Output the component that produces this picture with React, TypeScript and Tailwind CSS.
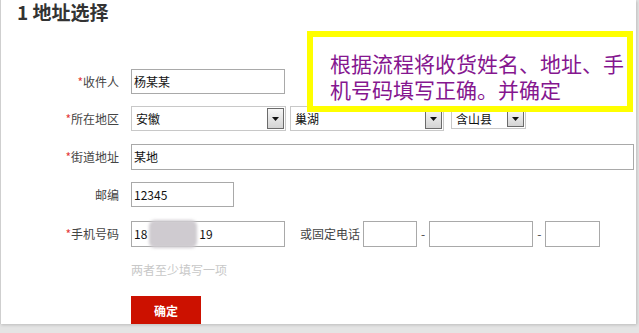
import React from 'react';

const font = { fontFamily: '"Noto Sans CJK SC", "Noto Sans", sans-serif' };

function Label({ text, required }: { text: string; required?: boolean }) {
  return (
    <div className="w-[118px] shrink-0 text-right text-[12px] leading-none text-[#444]">
      {required && <span className="text-[#e4393c]">*</span>}
      {text}
    </div>
  );
}

function Arrow() {
  return (
    <div className="flex h-full w-[17px] items-center justify-center border border-[#6b6b6b] bg-gradient-to-b from-[#f6f6f6] to-[#d4d4d4]">
      <svg width="7" height="4" viewBox="0 0 7 4">
        <path d="M0 0h7L3.5 4z" fill="#111" />
      </svg>
    </div>
  );
}

function Select({ value, className }: { value: string; className: string }) {
  return (
    <div className={`flex items-center border border-[#c8c8c8] bg-white pl-[4px] pr-[1px] py-[1px] ${className}`}>
      <span className="flex-1 text-[12px] text-[#111]">{value}</span>
      <Arrow />
    </div>
  );
}

export default function App() {
  return (
    <div className="h-[333px] w-[639px] bg-[#e4e4e4]" style={font}>
      <div className="relative h-[324px] w-[636px] overflow-hidden border-l border-[#cfcfcf] bg-white shadow-[1px_1px_3px_rgba(0,0,0,0.18)]">
        {/* Title */}
        <h2 className="mt-[2px] pl-[16px] text-[19px] font-bold leading-[20px] text-[#333]">1 地址选择</h2>

        {/* Form */}
        <div className="mt-[47px] flex flex-col">
          <div className="flex h-[25px] items-center">
            <Label text="收件人" required />
            <div className="ml-[12px] flex h-full w-[154px] items-center border border-[#a9a9a9] pl-[2px] text-[12px] text-[#111]">
              杨某某
            </div>
          </div>

          <div className="mt-[12px] flex h-[25px] items-center">
            <Label text="所在地区" required />
            <Select value="安徽" className="ml-[12px] h-[25px] w-[155px]" />
            <Select value="巢湖" className="ml-[4px] h-[25px] w-[154px]" />
            <Select value="含山县" className="ml-[7px] h-[21px] w-[75px]" />
          </div>

          <div className="mt-[13px] flex h-[26px] items-center">
            <Label text="街道地址" required />
            <div className="ml-[12px] flex h-full w-[503px] items-center border border-[#a9a9a9] pl-[2px] text-[12px] text-[#111]">
              某地
            </div>
          </div>

          <div className="mt-[12px] flex h-[25px] items-center">
            <Label text="邮编" />
            <div className="ml-[12px] flex h-full w-[103px] items-center border border-[#a9a9a9] pl-[2px] text-[12px] text-[#111]">
              12345
            </div>
          </div>

          <div className="mt-[14px] flex h-[26px] items-center">
            <Label text="手机号码" required />
            <div className="ml-[12px] flex h-full w-[154px] shrink-0 items-center border border-[#a9a9a9] pl-[2px] text-[12px] text-[#111]">
              18
              <span className="mx-[2px] h-[28px] w-[48px] rounded-[6px] bg-[#cfcbd0] blur-[1.5px]" />
              19
            </div>
            <span className="ml-[15px] text-[12px] text-[#444]">或固定电话</span>
            <div className="ml-[3px] h-full w-[54px] border border-[#a9a9a9]" />
            <span className="mx-[4px] text-[12px] text-[#444]">-</span>
            <div className="h-full w-[104px] border border-[#a9a9a9]" />
            <span className="mx-[4px] text-[12px] text-[#444]">-</span>
            <div className="h-full w-[55px] border border-[#a9a9a9]" />
          </div>

          <p className="ml-[130px] mt-[15px] text-[12px] leading-[16px] text-[#c8c8c8]">两者至少填写一项</p>

          <div className="ml-[130px] mt-[18px]">
            <button className="flex h-[30px] w-[70px] items-center justify-center bg-[#cc1100] text-[12px] font-bold text-white">
              确定
            </button>
          </div>
        </div>

        {/* Callout note */}
        <div className="absolute left-[306px] top-[31px] h-[81px] w-[326px] border-[6px] border-[#ffff00] bg-white pl-[17px] pt-[13px] text-[21px] leading-[26px] text-[#85168f]">
          根据流程将收货姓名、地址、手
          <br />
          机号码填写正确。并确定
        </div>
      </div>
    </div>
  );
}
